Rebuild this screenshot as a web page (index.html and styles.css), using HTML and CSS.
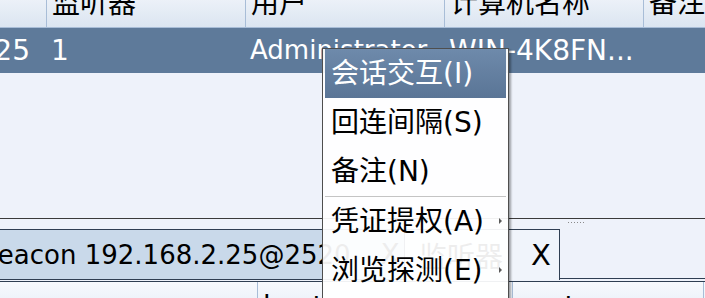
FILE: index.html
```html
<!DOCTYPE html>
<html lang="zh">
<head>
<meta charset="utf-8">
<title>Sessions</title>
<link rel="stylesheet" href="styles.css">
</head>
<body>
<div class="app">
  <div class="top-table">
    <div class="thead">
      <div class="th c0"></div>
      <div class="th c1">监听器</div>
      <div class="th c1">用户</div>
      <div class="th c1">计算机名称</div>
      <div class="th c2">备注</div>
    </div>
    <div class="tr selected">
      <div class="td c0"><span>192.168.2.25</span></div>
      <div class="td c1">1</div>
      <div class="td c1 user">Administrator</div>
      <div class="td c1">WIN-4K8FN...</div>
      <div class="td c2"></div>
    </div>
    <div class="empty"></div>
  </div>
  <div class="divider"><span class="grip"></span></div>
  <div class="tabs">
    <div class="tab beacon"><span class="tab-label">Beacon 192.168.2.25@2520</span><span class="close">X</span></div>
    <div class="tab listener"><span class="tab-label cjk">监听器</span><span class="close">X</span></div>
    <div class="tab-rest"></div>
  </div>
  <div class="bottom-table">
    <div class="bh w1"></div>
    <div class="bh w2"><span>host</span></div>
    <div class="bh w3"><span>port</span></div>
    <div class="bh w4"></div>
  </div>

  <div class="menu">
    <div class="item active">会话交互(I)</div>
    <div class="item">回连间隔(S)</div>
    <div class="item">备注(N)</div>
    <div class="sep"></div>
    <div class="item sub">凭证提权(A)<span class="arrow"></span></div>
    <div class="item sub">浏览探测(E)<span class="arrow"></span></div>
  </div>
</div>
</body>
</html>
```

FILE: styles.css
```css
html, body {
  margin: 0;
  padding: 0;
}
body {
  width: 705px;
  height: 298px;
  overflow: hidden;
  background: #eef2fa;
  font-family: "DejaVu Sans", "Noto Sans CJK SC", sans-serif;
  color: #000;
}
.app {
  position: relative;
  width: 705px;
  height: 298px;
  overflow: hidden;
}

/* top sessions table */
.top-table {
  margin-top: -12px;
}
.thead {
  display: flex;
  height: 39px;
  border-bottom: 1px solid #a8bdd7;
  background: linear-gradient(#f3f6fb, #dbe5f1);
}
.th {
  flex: none;
  box-sizing: border-box;
  padding-left: 5px;
  font-size: 28px;
  line-height: 32px;
  white-space: nowrap;
  overflow: hidden;
}
.c0 { width: 46px; }
.c1 { width: 199px; border-left: 1px solid #a8bdd7; }
.c2 { width: 80px; border-left: 1px solid #a8bdd7; }
.tr {
  display: flex;
  height: 45px;
}
.selected {
  background: #5e7a9a;
  color: #fff;
}
.td {
  flex: none;
  box-sizing: border-box;
  padding-left: 4px;
  font-size: 28px;
  line-height: 45px;
  white-space: nowrap;
  overflow: hidden;
}
.td.user {
  font-size: 26px;
}
.td.c0 {
  display: flex;
  justify-content: flex-end;
  padding-left: 0;
  padding-right: 16px;
}
.td.c0 span { flex: none; }
.tr .c1, .tr .c2 { border-left-color: transparent; }
.empty {
  height: 145px;
}

/* split divider */
.divider {
  height: 10px;
  border-top: 1px solid #3a3a3a;
  display: flex;
  padding-left: 567px;
}
.grip {
  width: 18px;
  height: 3px;
  margin-top: 2px;
  background: radial-gradient(circle, #8a8a8a 0.6px, transparent 0.9px) 0 0 / 3px 3px;
}

/* tab strip */
.tabs {
  display: flex;
  height: 50px;
}
.tab {
  flex: none;
  box-sizing: border-box;
  height: 51px;
  border-top: 1px solid #2f3e52;
  display: flex;
  align-items: center;
  white-space: nowrap;
}
.beacon {
  width: 435px;
  margin-left: -30px;
  padding-left: 10px;
  background: #c9d9ea;
  border-bottom: 1px solid #2f3e52;
  border-right: 1px solid #2f3e52;
  font-size: 26px;
}
.beacon .close { margin-left: 30px; font-size: 28px; }
.listener {
  width: 155px;
  padding-left: 14px;
  background: #f0f4fb;
  border-right: 1px solid #2f3e52;
}
.listener .tab-label { font-size: 28px; }
.listener .close { margin-left: 28px; font-size: 29px; }
.tab-rest {
  flex: 1;
  border-bottom: 1px solid #2f3e52;
  height: 50px;
  box-sizing: border-box;
}

/* bottom table header */
.bottom-table {
  display: flex;
  height: 30px;
  border-top: 1px solid #2f3e52;
  margin-top: 2px;
  background: linear-gradient(#f7f9fd, #e8eef7);
}
.bh {
  flex: none;
  box-sizing: border-box;
  font-size: 28px;
  line-height: 50px;
  padding-left: 5px;
  overflow: hidden;
  white-space: nowrap;
}
.w1 { width: 257px; }
.w2 { width: 255px; border-left: 1px solid #a8bdd7; }
.w3 { width: 191px; border-left: 1px solid #a8bdd7; padding-left: 5px; }
.w4 { width: 20px; border-left: 1px solid #a8bdd7; }

/* context menu */
.menu {
  position: absolute;
  left: 322px;
  top: 48px;
  width: 187px;
  height: 260px;
  box-sizing: border-box;
  border: 1px solid #4e4e4e;
  background: rgba(255, 255, 255, 0.93);
  padding: 0 2px;
  box-shadow: 2px 2px 2px rgba(0, 0, 0, 0.35);
}
.item {
  position: relative;
  height: 49px;
  line-height: 49px;
  padding-left: 6px;
  font-size: 28px;
  white-space: nowrap;
}
.item.active {
  background: linear-gradient(#6e8aab, #5a7596);
  color: #fff;
}
.sep {
  height: 1px;
  background: #c4c4c4;
}
.arrow {
  position: absolute;
  right: 4px;
  top: 21px;
  width: 0;
  height: 0;
  border-left: 3px solid #5a5a5a;
  border-top: 3px solid transparent;
  border-bottom: 3px solid transparent;
}
```
